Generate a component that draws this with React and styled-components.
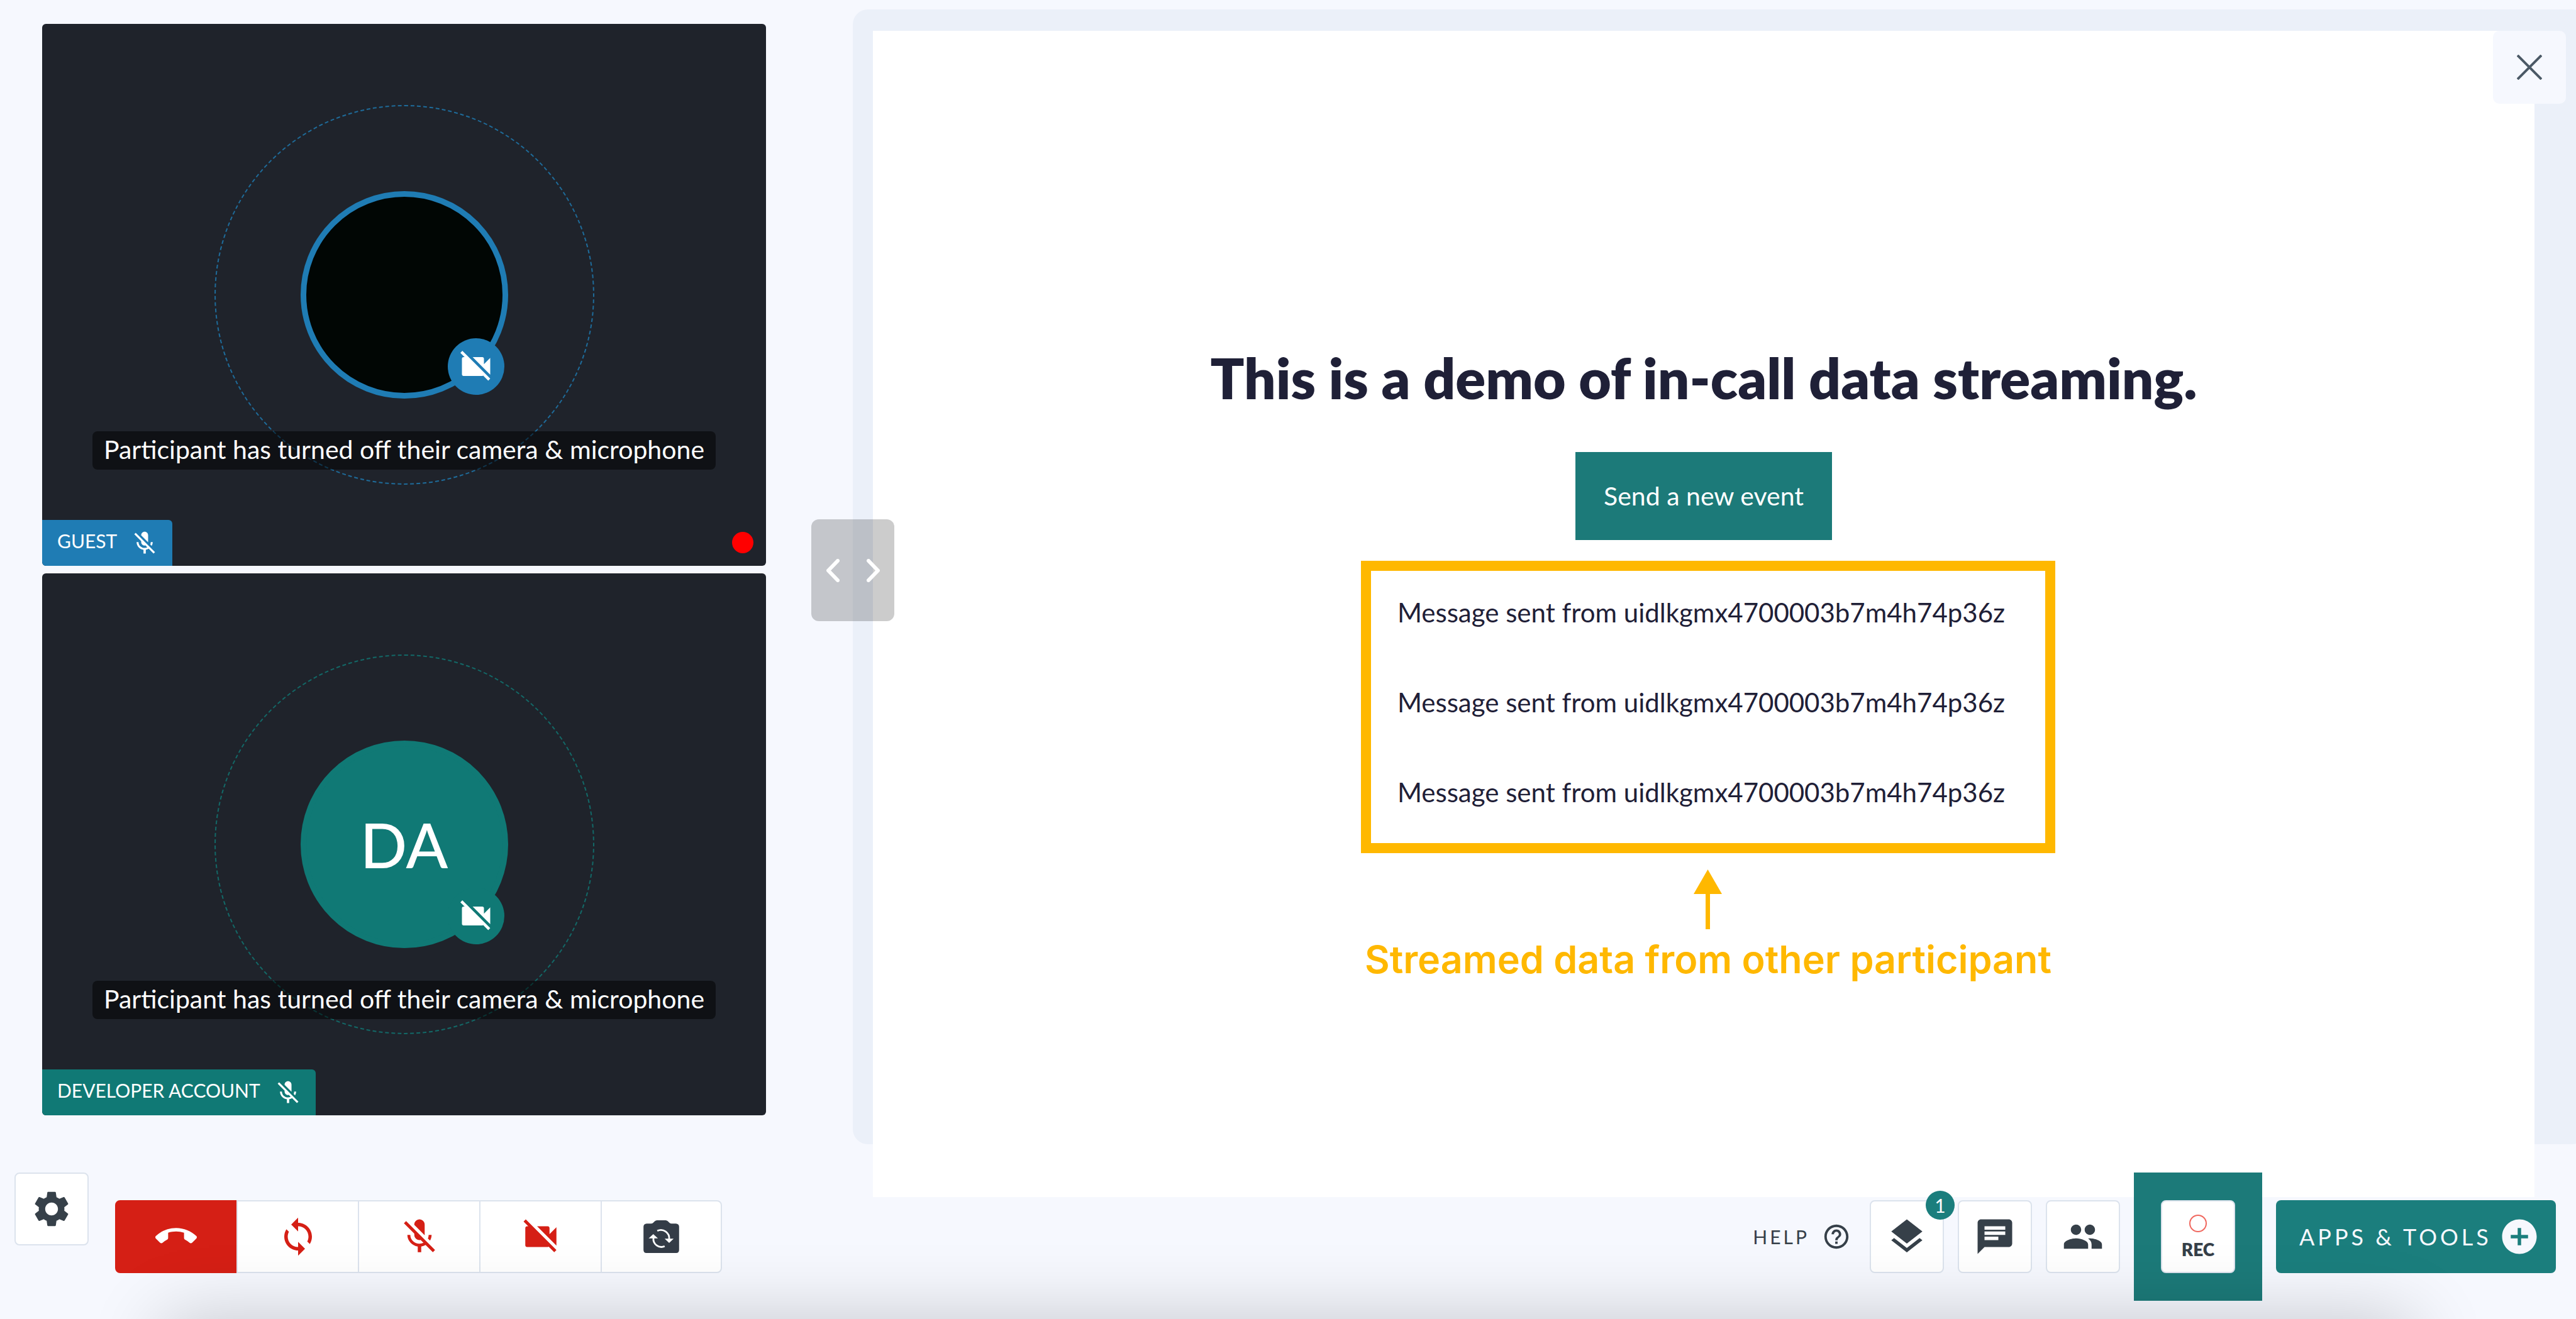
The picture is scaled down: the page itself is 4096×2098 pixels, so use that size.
import React from "react";
import styled, { createGlobalStyle, css } from "styled-components";
import {
  MdAddCircle,
  MdCallEnd,
  MdChat,
  MdHelpOutline,
  MdLayers,
  MdMicOff,
  MdPeople,
  MdSettings,
  MdSync,
  MdVideocamOff,
} from "react-icons/md";

const color = {
  page: "#f6f8fe",
  panel: "#ebf0f9",
  tile: "#1f232b",
  blue: "#1f7cb4",
  green: "#107975",
  teal: "#1c7a79",
  tealBright: "#1b7e7d",
  red: "#d51f15",
  slate: "#364049",
  ink: "#1f2037",
  amber: "#ffb800",
  line: "#dce3ed",
};

const GlobalStyle = createGlobalStyle`
  *, *::before, *::after { box-sizing: border-box; }
  body {
    margin: 0;
    background: ${color.page};
    color: ${color.ink};
    font-family: Lato, "Open Sans", sans-serif;
    overflow: hidden;
  }
  svg { display: block; flex: none; }
`;

const Page = styled.div`
  display: flex;
  flex-direction: column;
  height: 100vh;
`;

const Main = styled.main`
  flex: 1;
  min-height: 0;
  display: grid;
  grid-template-columns: minmax(0, 1356fr) minmax(0, 2740fr);
`;

const ButtonBase = styled.button`
  margin: 0;
  padding: 0;
  border: 0;
  color: inherit;
  font-family: inherit;
  cursor: pointer;
`;

/* ---------- participants ---------- */

const Participants = styled.section`
  display: flex;
  flex-direction: column;
  gap: 12px;
  padding: 38px 138px 91px 67px;
`;

const Tile = styled.article`
  position: relative;
  flex: 1;
  display: grid;
  place-items: center;
  background: ${color.tile};
  border-radius: 6px;
  overflow: hidden;
`;

const Ring = styled.div`
  display: grid;
  place-items: center;
  width: 604px;
  height: 604px;
  border: 2px dashed ${(p) => p.$tint}d0;
  border-radius: 50%;
`;

const Avatar = styled.div`
  position: relative;
  display: grid;
  place-items: center;
  width: 330px;
  height: 330px;
  border: 9px solid ${(p) => p.$tint};
  border-radius: 50%;
  background: ${(p) => (p.$dark ? "#010604" : p.$tint)};
  color: #fff;
  font-size: 98px;
  line-height: 116px;
  font-weight: 500;
`;

const CameraBadge = styled.span`
  position: absolute;
  right: -3px;
  bottom: -3px;
  display: grid;
  place-items: center;
  width: 90px;
  height: 90px;
  border-radius: 50%;
  background: ${(p) => p.$tint};
`;

const Caption = styled.p`
  position: absolute;
  top: calc(50% + 217px);
  margin: 0;
  padding: 4px 18px 7px;
  border-radius: 8px;
  background: rgba(0, 0, 0, 0.5);
  color: #fff;
  font-size: 41px;
  line-height: 50px;
  white-space: nowrap;
`;

const NameTag = styled.div`
  position: absolute;
  left: 0;
  bottom: 0;
  display: flex;
  align-items: center;
  gap: 22px;
  height: 73px;
  padding: 0 22px 0 24px;
  border-top-right-radius: 6px;
  background: ${(p) => p.$tint};
  color: #fff;
  font-size: 30px;
  line-height: 36px;
  text-transform: uppercase;
`;

const NameText = styled.span`
  padding-bottom: 8px;
`;

const LiveDot = styled.span`
  position: absolute;
  right: 20px;
  bottom: 20px;
  width: 34px;
  height: 34px;
  border-radius: 50%;
  background: #ff0000;
`;

/* ---------- shared app ---------- */

const Panel = styled.section`
  position: relative;
  display: flex;
  flex-direction: column;
  margin: 15px -18px 45px 0;
  padding: 34px 84px 0 32px;
  border-radius: 24px;
  background: ${color.panel};
`;

const Frame = styled.div`
  flex: 1;
  display: flex;
  flex-direction: column;
  align-items: center;
  margin-bottom: -84px;
  padding-top: 499px;
  background: #fff;
`;

const Title = styled.h1`
  margin: 0 0 65px;
  font-size: 89px;
  line-height: 106px;
  font-weight: 800;
`;

const SendButton = styled(ButtonBase)`
  height: 140px;
  margin-bottom: 33px;
  padding: 0 45px;
  background: ${color.teal};
  color: #fff;
  font-size: 41px;
  line-height: 50px;
`;

const Annotated = styled.figure`
  display: flex;
  flex-direction: column;
  align-items: center;
  margin: 0 0 0 14px;
`;

const Messages = styled.ul`
  display: flex;
  flex-direction: column;
  gap: 93px;
  margin: 0 0 26px;
  padding: 41px 64px 56px 42px;
  border: 16px solid ${color.amber};
  list-style: none;
  font-size: 42px;
  line-height: 50px;
`;

const AnnotationText = styled.figcaption`
  display: flex;
  flex-direction: column;
  align-items: center;
  gap: 11px;
  color: ${color.amber};
  font-family: Inter, sans-serif;
  font-size: 61px;
  line-height: 74px;
  font-weight: 600;
`;

const CloseButton = styled(ButtonBase)`
  position: absolute;
  top: 34px;
  right: 34px;
  display: grid;
  place-items: center;
  width: 116px;
  height: 116px;
  border-radius: 10px;
  background: ${color.page};
`;

const ResizeHandle = styled(ButtonBase)`
  position: absolute;
  top: 811px;
  left: -66px;
  display: flex;
  align-items: center;
  justify-content: center;
  gap: 43px;
  width: 132px;
  height: 162px;
  border-radius: 12px;
  background: rgba(0, 0, 0, 0.2);
`;

/* ---------- toolbar ---------- */

const Toolbar = styled.footer`
  position: relative;
  display: flex;
  align-items: center;
  padding: 0 32px 29px 23px;
  color: ${color.slate};
`;

const BoxedButton = styled(ButtonBase)`
  position: relative;
  display: flex;
  flex-direction: column;
  align-items: center;
  justify-content: center;
  height: 116px;
  border: 2px solid ${color.line};
  background: #fff;
`;

const IconButton = styled(BoxedButton)`
  width: 118px;
  border-radius: 8px;
  align-self: ${(p) => (p.$raised ? "flex-start" : "auto")};
`;

const CallControls = styled.div`
  display: flex;
  margin-left: 42px;
`;

const callTones = {
  off: css`
    color: ${color.red};
  `,
  plain: css`
    color: #343c47;
  `,
  hangUp: css`
    border-color: ${color.red};
    background: ${color.red};
    color: #fff;
  `,
};

const CallButton = styled(BoxedButton)`
  width: 193px;
  ${(p) => callTones[p.$tone]}
  &:not(:first-child):not(:last-child) {
    border-right-width: 0;
  }
  &:first-child {
    border-radius: 8px 0 0 8px;
  }
  &:last-child {
    border-radius: 0 8px 8px 0;
  }
`;

const Tools = styled.nav`
  display: flex;
  align-items: center;
  gap: 22px;
  margin-left: auto;
`;

const HelpLink = styled.a`
  display: flex;
  align-items: center;
  gap: 20px;
  margin-right: 8px;
  color: ${color.slate};
  font-size: 30px;
  line-height: 36px;
  letter-spacing: 4px;
  text-decoration: none;
`;

const Count = styled.span`
  position: absolute;
  top: -17px;
  right: -19px;
  display: grid;
  place-items: center;
  width: 46px;
  height: 46px;
  border-radius: 50%;
  background: ${color.tealBright};
  color: #fff;
  font-size: 30px;
  line-height: 36px;
`;

const RecordHighlight = styled.div`
  padding: 44px 43px;
  background: ${color.teal};
`;

const RecordDot = styled.span`
  width: 28px;
  height: 28px;
  margin: 2px 0 10px;
  border: 2px solid #f0685f;
  border-radius: 50%;
`;

const RecordText = styled.span`
  font-size: 28px;
  line-height: 34px;
  font-weight: 800;
`;

const AppsButton = styled(ButtonBase)`
  display: flex;
  align-items: center;
  justify-content: space-between;
  width: 445px;
  height: 116px;
  padding: 0 25px 0 37px;
  border-radius: 8px;
  background: ${color.tealBright};
  color: ${color.page};
  font-size: 36px;
  line-height: 44px;
  letter-spacing: 5px;
`;

/* Soft grey glow rising from the lower edge of the window. */
const BottomShade = styled.div`
  position: fixed;
  top: 100%;
  left: 260px;
  right: 260px;
  height: 400px;
  box-shadow: 0 0 112px rgba(0, 0, 0, 0.2);
  pointer-events: none;
`;

/* ---------- drawings ---------- */

const Chevron = ({ points }) => (
  <svg width="21" height="37" viewBox="0 0 21 37" aria-hidden="true">
    <polyline points={points} fill="none" stroke="#fff" strokeWidth="6" strokeLinecap="round" strokeLinejoin="round" />
  </svg>
);

const CrossIcon = () => (
  <svg width="40" height="40" viewBox="0 0 40 40" aria-hidden="true">
    <path d="M1 1l38 38M39 1L1 39" stroke="#4b5966" strokeWidth="4" />
  </svg>
);

const UpArrow = () => (
  <svg width="45" height="95" viewBox="0 0 45 95" aria-hidden="true">
    <path d="M22.5 0L45 39H26v56h-7V39H0z" fill={color.amber} />
  </svg>
);

const SwitchCameraIcon = () => (
  <svg width="57" height="52" viewBox="0 0 222 204" aria-hidden="true">
    <path
      d="M20 21H48Q57 21 62 14L70 6Q76 0 84 0H138Q146 0 152 6L160 14Q165 21 174 21H202Q222 23 222 40V184Q222 204 204 204H18Q0 204 0 184V40Q0 23 20 21Z"
      fill="currentColor"
    />
    <path d="M86 66A52 52 0 0 1 160 118M62 110A50 50 0 0 0 132 162" fill="none" stroke="#fff" strokeWidth="11" />
    <path d="M132 115H188L160 141ZM32 113H90L61 86Z" fill="#fff" />
  </svg>
);

/* ---------- content ---------- */

const participants = [
  { name: "Guest", tint: color.blue, dark: true, live: true },
  { name: "Developer Account", tint: color.green, initials: "DA" },
];

const messages = Array(3).fill("Message sent from uidlkgmx4700003b7m4h74p36z");

const Participant = ({ name, tint, initials, dark, live }) => (
  <Tile aria-label={name}>
    <Ring $tint={tint}>
      <Avatar $tint={tint} $dark={dark}>
        {initials}
        <CameraBadge $tint={tint}>
          <MdVideocamOff size={60} />
        </CameraBadge>
      </Avatar>
    </Ring>
    <Caption>Participant has turned off their camera &amp; microphone</Caption>
    <NameTag $tint={tint}>
      <NameText>{name}</NameText>
      <MdMicOff size={44} />
    </NameTag>
    {live && <LiveDot />}
  </Tile>
);

export default function App() {
  return (
    <Page>
      <GlobalStyle />
      <Main>
        <Participants>
          {participants.map((p) => (
            <Participant key={p.name} {...p} />
          ))}
        </Participants>
        <Panel>
          <Frame>
            <Title>This is a demo of in-call data streaming.</Title>
            <SendButton type="button">Send a new event</SendButton>
            <Annotated>
              <Messages>
                {messages.map((m, i) => (
                  <li key={i}>{m}</li>
                ))}
              </Messages>
              <AnnotationText>
                <UpArrow />
                Streamed data from other participant
              </AnnotationText>
            </Annotated>
          </Frame>
          <CloseButton type="button" aria-label="Close">
            <CrossIcon />
          </CloseButton>
          <ResizeHandle type="button" aria-label="Resize panels">
            <Chevron points="18,3 3,18.5 18,34" />
            <Chevron points="3,3 18,18.5 3,34" />
          </ResizeHandle>
        </Panel>
      </Main>
      <Toolbar>
        <IconButton type="button" $raised aria-label="Settings">
          <MdSettings size={68} />
        </IconButton>
        <CallControls>
          <CallButton type="button" $tone="hangUp" aria-label="End call">
            <MdCallEnd size={66} />
          </CallButton>
          <CallButton type="button" $tone="off" aria-label="Refresh">
            <MdSync size={66} />
          </CallButton>
          <CallButton type="button" $tone="off" aria-label="Unmute microphone">
            <MdMicOff size={66} />
          </CallButton>
          <CallButton type="button" $tone="off" aria-label="Turn camera on">
            <MdVideocamOff size={66} />
          </CallButton>
          <CallButton type="button" $tone="plain" aria-label="Switch camera">
            <SwitchCameraIcon />
          </CallButton>
        </CallControls>
        <Tools>
          <HelpLink href="#help">
            HELP
            <MdHelpOutline size={46} />
          </HelpLink>
          <IconButton type="button" aria-label="Layers">
            <MdLayers size={66} />
            <Count>1</Count>
          </IconButton>
          <IconButton type="button" aria-label="Chat">
            <MdChat size={66} />
          </IconButton>
          <IconButton type="button" aria-label="Participants">
            <MdPeople size={66} />
          </IconButton>
          <RecordHighlight>
            <IconButton type="button">
              <RecordDot />
              <RecordText>REC</RecordText>
            </IconButton>
          </RecordHighlight>
          <AppsButton type="button">
            APPS &amp; TOOLS
            <MdAddCircle size={66} />
          </AppsButton>
        </Tools>
      </Toolbar>
      <BottomShade />
    </Page>
  );
}
